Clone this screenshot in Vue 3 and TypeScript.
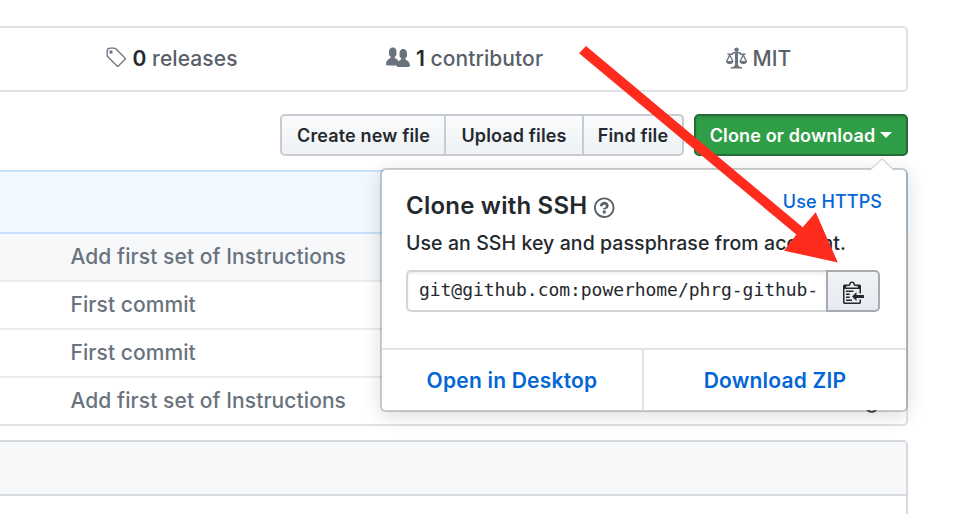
<script setup lang="ts">
interface Stat { icon: string; box: number; count?: string; label: string }

const icons = {
  tag: 'M7.685 1.72a2.49 2.49 0 0 0-1.76-.726H3.48A2.5 2.5 0 0 0 .994 3.48v2.456c0 .656.269 1.292.726 1.76l6.024 6.024a.99.99 0 0 0 1.402 0l4.563-4.563a.99.99 0 0 0 0-1.402L7.685 1.72zM2.366 7.048a1.54 1.54 0 0 1-.467-1.123V3.48c0-.874.716-1.58 1.58-1.58h2.456c.418 0 .825.159 1.123.467l6.104 6.094-4.702 4.702-6.094-6.114zm.626-4.066h1.989v1.989H2.982V2.982h.01z',
  people: 'M16 12.999c0 .439-.45 1-1 1H7.995c-.539 0-.994-.447-.995-.999H1c-.54 0-1-.561-1-1 0-2.634 3-4 3-4s.229-.409 0-1c-.841-.621-1.058-.59-1-3 .058-2.419 1.367-3 2.5-3s2.442.58 2.5 3c.058 2.41-.159 2.379-1 3-.229.59 0 1 0 1s1.549.711 2.42 2.088C9.196 9.369 10 8.999 10 8.999s.229-.409 0-1c-.841-.62-1.058-.59-1-3 .058-2.419 1.367-3 2.5-3s2.437.581 2.495 3c.059 2.41-.158 2.38-1 3-.229.59 0 1 0 1s3.005 1.366 3.005 4z',
  law: 'M7 4c-.83 0-1.5-.67-1.5-1.5S6.17 1 7 1s1.5.67 1.5 1.5S7.83 4 7 4zm7 6c0 1.11-.89 2-2 2h-1c-1.11 0-2-.89-2-2l2-4h-1c-.55 0-1-.45-1-1H8v8c.42 0 1 .45 1 1h1c.42 0 1 .45 1 1H3c0-.55.58-1 1-1h1c0-.55.58-1 1-1h.03L6 5H5c0 .55-.45 1-1 1H3l2 4c0 1.11-.89 2-2 2H2c-1.11 0-2-.89-2-2l2-4H1V5h3c0-.55.45-1 1-1h4c.55 0 1 .45 1 1h3v1h-1l2 4zM2.5 7L1 10h3L2.5 7zM13 10l-1.5-3-1.5 3h3z',
  question: 'M6 10h2v2H6v-2zm4-3.5C10 8.64 8 9 8 9H6c0-.55.45-1 1-1h.5c.28 0 .5-.22.5-.5v-1c0-.28-.22-.5-.5-.5h-1c-.28 0-.5.22-.5.5V7H4c0-1.5 1.5-3 3-3s3 1 3 2.5zM7 2.3c3.14 0 5.7 2.56 5.7 5.7s-2.56 5.7-5.7 5.7A5.71 5.71 0 0 1 1.3 8c0-3.14 2.56-5.7 5.7-5.7zM7 1C3.14 1 0 4.14 0 8s3.14 7 7 7 7-3.14 7-7-3.14-7-7-7z',
  clippy: 'M2 13h4v1H2v-1zm5-6H2v1h5V7zm2 3V8l-3 3 3 3v-2h5v-2H9zM4.5 9H2v1h2.5V9zM2 12h2.5v-1H2v1zm9 1h1v2c-.02.28-.11.52-.3.7-.19.18-.42.28-.7.3H1c-.55 0-1-.45-1-1V4c0-.55.45-1 1-1h3c0-1.11.89-2 2-2 1.11 0 2 .89 2 2h3c.55 0 1 .45 1 1v5h-1V6H1v9h10v-2zM2 5h8c0-.55-.45-1-1-1H8c-.55 0-1-.45-1-1s-.45-1-1-1-1 .45-1 1-.45 1-1 1H3c-.55 0-1 .45-1 1z',
}

const stats: Stat[] = [
  { icon: icons.tag, box: 14, count: '0', label: 'releases' },
  { icon: icons.people, box: 16, count: '1', label: 'contributor' },
  { icon: icons.law, box: 14, label: 'MIT' },
]

const commits: string[] = [
  'Add first set of Instructions',
  'First commit',
  'First commit',
  'Add first set of Instructions',
]
</script>

<template>
  <main class="page">
    <ul class="stats">
      <li v-for="s in stats" :key="s.label" class="stat">
        <svg class="octicon" :width="s.box * 1.5" height="24" :viewBox="`0 0 ${s.box} 16`"><path fill-rule="evenodd" :d="s.icon" /></svg>
        <span><b v-if="s.count">{{ s.count }}</b>{{ s.count ? ' ' : '' }}{{ s.label }}</span>
      </li>
    </ul>

    <div class="actions">
      <div class="group">
        <button class="btn create">Create new file</button>
        <button class="btn upload">Upload files</button>
        <button class="btn find">Find file</button>
      </div>
      <div class="clone">
        <button class="btn primary">Clone or download<i class="caret"></i></button>

        <section class="popover">
          <svg class="pointer" width="26" height="13" viewBox="0 0 26 13">
            <path class="pointer-edge" d="M0 12.5 13 0l13 12.5z" />
            <path class="pointer-fill" d="M1 13 13 1.6 24.6 13z" />
          </svg>
          <div class="body">
            <header class="head">
              <h4>Clone with SSH</h4>
              <svg class="octicon help" width="20.5" height="23.4" viewBox="0 0 14 16"><path fill-rule="evenodd" :d="icons.question" /></svg>
              <a class="https">Use HTTPS</a>
            </header>
            <p class="hint">Use an SSH key and passphrase from account.</p>
            <div class="field">
              <div class="url"><span>git@github.com:powerhome/phrg-github-</span></div>
              <button class="copy">
                <svg width="21" height="24" viewBox="0 0 14 16"><path fill-rule="evenodd" :d="icons.clippy" /></svg>
              </button>
            </div>
          </div>
          <footer class="foot">
            <a>Open in Desktop</a>
            <a>Download ZIP</a>
          </footer>
        </section>
      </div>
    </div>

    <div class="files">
      <div class="tease"></div>
      <div v-for="(c, i) in commits" :key="i" class="row">
        <span>{{ c }}</span>
        <span v-if="i === commits.length - 1" class="age">ago</span>
      </div>
    </div>

    <div class="readme"><div class="readme-head"></div></div>

    <svg class="arrow" width="954" height="514" viewBox="0 0 954 514">
      <polygon points="586,46 802.7,227.3 815.7,212.3 837.8,262.4 784,250.7 796.4,234.6 579,53.3" />
    </svg>
  </main>
</template>

<style>
body { background: #fff; overflow: hidden; }
</style>

<style scoped>
* { box-sizing: border-box; }
.page {
  position: relative;
  width: 954px;
  height: 514px;
  padding: 26px 46px 0 0;
  overflow: hidden;
  font-family: Inter, Roboto, "Liberation Sans", sans-serif;
  font-weight: 450;
  letter-spacing: 0.005em;
  color: #24292e;
}
.octicon { flex: none; fill: #6a737d; }

.stats {
  display: flex;
  height: 66px;
  margin: 0;
  padding: 0 1px 1px 25px;
  list-style: none;
  border: 2px solid #dfe2e5;
  border-left: 0;
  border-radius: 0 5px 5px 0;
}
.stat {
  flex: 1;
  display: flex;
  align-items: center;
  justify-content: center;
  gap: 6px;
  font-size: 21px;
  line-height: 30px;
  letter-spacing: 0.004em;
  color: #586069;
}
.stat .octicon { margin-top: -1px; }
.stat:last-child { padding-left: 1px; }
.stat b { font-weight: 600; color: #24292e; }

.actions {
  display: flex;
  justify-content: flex-end;
  gap: 10px;
  height: 42px;
  margin-top: 22px;
}
.group { display: flex; }
.btn {
  height: 42px;
  padding: 2px 0 0;
  border: 2px solid #c8cbcf;
  font: 600 18px/30px Inter, Roboto, sans-serif;
  letter-spacing: 0.008em;
  color: #24292e;
  background: linear-gradient(180deg, #fafbfc, #eff3f6 90%);
}
.create { width: 166px; padding-left: 1px; border-radius: 5px 0 0 5px; }
.upload { width: 138px; border-left: 0; }
.find { width: 100px; border-left: 0; border-radius: 0 5px 5px 0; }
.primary {
  display: flex;
  align-items: center;
  justify-content: center;
  width: 214px;
  gap: 5px;
  color: #fff;
  border-color: #266c37;
  border-radius: 5px;
  background: #309e47;
  box-shadow: inset 0 2px 3px rgba(27, 31, 35, 0.12);
}
.caret {
  margin-top: -2px;
  border: 6px solid transparent;
  border-top-color: #fff;
  border-bottom: 0;
}

.clone { position: relative; }
.popover {
  position: absolute;
  z-index: 2;
  top: 54px;
  right: 0;
  width: 528px;
  height: 244px;
  border: 2px solid rgba(27, 31, 35, 0.22);
  border-radius: 6px;
  background: #fff;
  background-clip: padding-box;
  box-shadow: 0 4px 18px rgba(27, 31, 35, 0.15);
}
.pointer { position: absolute; top: -12px; right: 11px; }
.pointer-edge { fill: #cfd1d3; }
.pointer-fill { fill: #fff; }
.body { height: 178px; padding: 21px 26px 0 24px; }
.head { display: flex; height: 30px; align-items: center; }
.head h4 { margin: 0; font-weight: 600; font-size: 24px; line-height: 30px; letter-spacing: 0.009em; }
.help { margin: 4px 0 0 7px; fill: #586069; }
.https {
  margin: -9px -2px 0 auto;
  font-size: 18px;
  line-height: 27px;
  color: #0366d6;
}
.hint {
  margin: 7px 0 12px;
  font-size: 19.5px;
  line-height: 30px;
  white-space: nowrap;
}
.field { display: flex; height: 42px; }
.url {
  flex: 1;
  min-width: 0;
  padding: 0 7px 2px 11px;
  border: 2px solid #d1d5da;
  border-right: 0;
  border-radius: 5px 0 0 5px;
  box-shadow: inset 0 2px 3px rgba(27, 31, 35, 0.07);
}
.url span {
  display: block;
  font: 18px/36px "DejaVu Sans Mono", monospace;
  letter-spacing: -0.05px;
  white-space: nowrap;
}
.copy {
  flex: none;
  display: flex;
  align-items: center;
  justify-content: center;
  width: 54px;
  padding: 2px 0 0;
  border: 2px solid #a6abb0;
  border-radius: 0 5px 5px 0;
  background: linear-gradient(180deg, #f0f3f6, #e6ebf1 90%);
}
.copy svg { fill: #24292e; }
.foot {
  display: flex;
  height: 62px;
  border-top: 2px solid #e1e4e8;
}
.foot a {
  width: 260px;
  font-weight: 600;
  font-size: 21px;
  line-height: 61px;
  letter-spacing: 0.01em;
  text-align: center;
  color: #0366d6;
}
.foot a + a { width: 264px; border-left: 2px solid #e1e4e8; }

.files {
  height: 256px;
  margin-top: 14px;
  border-right: 2px solid #dfe2e5;
  border-bottom: 2px solid #dfe2e5;
  border-radius: 0 5px 5px 0;
}
.tease {
  height: 64px;
  margin-right: -2px;
  border: 2px solid #c8e1ff;
  border-left: 0;
  border-radius: 0 5px 0 0;
  background: #f1f8ff;
}
.row {
  display: flex;
  justify-content: space-between;
  height: 48px;
  padding: 0 15px 0 70.5px;
  font-size: 21px;
  line-height: 45px;
  color: #6a737d;
  border-bottom: 2px solid #eaecef;
}
.age { color: #444d56; }
.row:nth-child(2) { background: #f6f8fa; }
.row:last-child { height: 46px; border-bottom: 0; }

.readme {
  height: 90px;
  margin-top: 14px;
  border: 2px solid #d5d8dc;
  border-left: 0;
  border-radius: 0 5px 0 0;
}
.readme-head {
  height: 54px;
  border-bottom: 2px solid #d8dbde;
  background: #f6f8fa;
}
.arrow { position: absolute; z-index: 3; top: 0; left: 0; fill: #ff2b1d; pointer-events: none; }
</style>
